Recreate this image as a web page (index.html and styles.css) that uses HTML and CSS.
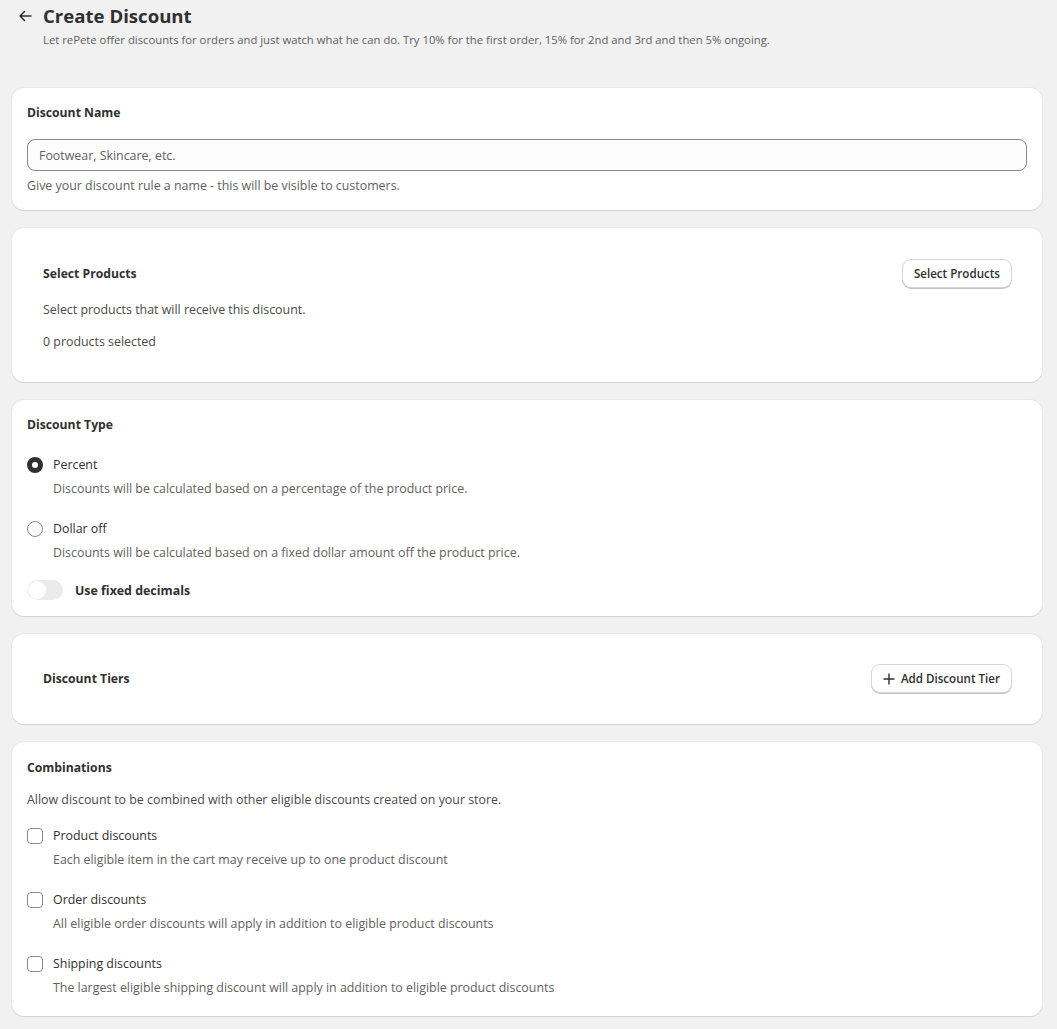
FILE: index.html
```html
<!DOCTYPE html>
<html>
<head>
  <title>Create Discount</title>
  <link rel="stylesheet" href="styles.css">
</head>
<body>
  <div class="page">
    <div class="page-header">
      <div class="title-row">
        <span class="back">
          <svg width="14" height="14" viewBox="0 0 14 14"><path d="M13 7H2M6.5 2.5L2 7l4.5 4.5" fill="none" stroke="#303030" stroke-width="1.5" stroke-linecap="round" stroke-linejoin="round"/></svg>
        </span>
        <h1>Create Discount</h1>
      </div>
      <p class="subtitle">Let rePete offer discounts for orders and just watch what he can do. Try 10% for the first order, 15% for 2nd and 3rd and then 5% ongoing.</p>
    </div>

    <!-- Discount name -->
    <div class="card name">
      <h2>Discount Name</h2>
      <input type="text" class="text-input" placeholder="Footwear, Skincare, etc.">
      <p class="help">Give your discount rule a name - this will be visible to customers.</p>
    </div>

    <!-- Products -->
    <div class="card">
      <div class="inner products">
        <div class="row-between">
          <h2>Select Products</h2>
          <button class="btn">Select Products</button>
        </div>
        <p class="text">Select products that will receive this discount.</p>
        <p class="text last">0 products selected</p>
      </div>
    </div>

    <!-- Type -->
    <div class="card">
      <h2>Discount Type</h2>
      <div class="choice">
        <span class="radio checked"></span>
        <span class="choice-label">Percent</span>
      </div>
      <p class="choice-desc">Discounts will be calculated based on a percentage of the product price.</p>
      <div class="choice">
        <span class="radio"></span>
        <span class="choice-label">Dollar off</span>
      </div>
      <p class="choice-desc">Discounts will be calculated based on a fixed dollar amount off the product price.</p>
      <div class="toggle-row">
        <span class="toggle"><span class="knob"></span></span>
        <span class="toggle-label">Use fixed decimals</span>
      </div>
    </div>

    <!-- Tiers -->
    <div class="card">
      <div class="inner tiers">
        <div class="row-between">
          <h2>Discount Tiers</h2>
          <button class="btn">
            <svg width="12" height="12" viewBox="0 0 12 12"><path d="M6 1v10M1 6h10" stroke="#303030" stroke-width="1.4" stroke-linecap="round"/></svg>
            Add Discount Tier
          </button>
        </div>
      </div>
    </div>

    <!-- Combinations -->
    <div class="card combos">
      <h2>Combinations</h2>
      <p class="text top">Allow discount to be combined with other eligible discounts created on your store.</p>
      <div class="choice first">
        <span class="checkbox"></span>
        <span class="choice-label">Product discounts</span>
      </div>
      <p class="choice-desc">Each eligible item in the cart may receive up to one product discount</p>
      <div class="choice">
        <span class="checkbox"></span>
        <span class="choice-label">Order discounts</span>
      </div>
      <p class="choice-desc">All eligible order discounts will apply in addition to eligible product discounts</p>
      <div class="choice">
        <span class="checkbox"></span>
        <span class="choice-label">Shipping discounts</span>
      </div>
      <p class="choice-desc">The largest eligible shipping discount will apply in addition to eligible product discounts</p>
    </div>
  </div>
</body>
</html>
```

FILE: styles.css
```css
/* Page */
body {
  margin: 0;
  background-color: #f1f1f1;
  font-family: "Open Sans", Arial, sans-serif;
  font-size: 12.4px;
  color: #303030;
}

.page {
  padding: 4px 15px 12px 12px;
}

.page-header {
  padding: 0 0 0 6px;
  margin-bottom: 41px;
}

.title-row {
  display: flex;
  align-items: center;
  gap: 11px;
}

.back {
  display: flex;
  width: 14px;
  height: 14px;
}

h1 {
  margin: 0;
  font-size: 18.6px;
  font-weight: 700;
  line-height: 24px;
  color: #303030;
}

.subtitle {
  margin: 4px 0 0 25px;
  font-size: 11.3px;
  color: #616161;
}

/* Cards */
.card {
  background-color: #fff;
  border-radius: 12px;
  box-shadow: 0 1px 0 #d4d4d4, 0 0 0 1px #e8e8e8;
  padding: 16px 15px;
  margin-bottom: 18px;
}

.card.name {
  padding-bottom: 15px;
}

.card h2 {
  margin: 0;
  font-size: 12.2px;
  font-weight: 700;
  line-height: 18px;
}

.inner {
  padding: 16px;
}

.inner.products {
  padding-bottom: 15px;
}

.inner.tiers {
  padding: 15px 16px 16px;
}

.row-between {
  display: flex;
  justify-content: space-between;
  align-items: center;
}

.text {
  margin: 14px 0 0;
  line-height: 18px;
  color: #4a4a4a;
}

.text.last {
  margin-top: 14px;
}

.text.top {
  margin-top: 14px;
}

.help {
  margin: 6px 0 0;
  line-height: 18px;
  color: #616161;
}

.text-input {
  display: block;
  width: 100%;
  box-sizing: border-box;
  margin-top: 17px;
  height: 32px;
  padding: 0 11px;
  border: 1px solid #8a8a8a;
  border-radius: 8px;
  background-color: #fdfdfd;
  font-family: inherit;
  font-size: 12.4px;
  color: #303030;
  outline: none;
}

.text-input::placeholder {
  color: #616161;
}

.btn {
  display: inline-flex;
  align-items: center;
  gap: 6px;
  height: 27px;
  padding: 0 11px;
  border: none;
  border-radius: 8px;
  background-color: #fff;
  box-shadow: 0 0 0 1px #d6d6d6, 0 1px 0 1px #c4c4c4;
  font-family: inherit;
  font-size: 11.6px;
  font-weight: 600;
  color: #303030;
  cursor: pointer;
}

/* Radios and checkboxes */
.choice {
  display: flex;
  align-items: center;
  gap: 10px;
  margin-top: 21px;
  line-height: 20px;
}

.choice.first {
  margin-top: 17px;
}

.choice-label {
  color: #303030;
}

.choice-desc {
  margin: 5px 0 0 26px;
  line-height: 18px;
  color: #616161;
}

.combos {
  padding-top: 17px;
  padding-bottom: 19px;
}

.radio {
  width: 16px;
  height: 16px;
  box-sizing: border-box;
  border: 1px solid #8a8a8a;
  border-radius: 50%;
  background-color: #fff;
}

.radio.checked {
  border: 5px solid #303030;
}

.checkbox {
  width: 16px;
  height: 16px;
  box-sizing: border-box;
  border: 1px solid #8a8a8a;
  border-radius: 4px;
  background-color: #fff;
}

.toggle-row {
  display: flex;
  align-items: center;
  gap: 12px;
  margin-top: 18px;
}

.toggle {
  display: flex;
  align-items: center;
  width: 36px;
  height: 20px;
  border-radius: 10px;
  background-color: #ebebeb;
}

.knob {
  width: 18px;
  height: 18px;
  margin-left: 1px;
  border-radius: 50%;
  background-color: #fff;
}

.toggle-label {
  font-weight: 700;
}
```
